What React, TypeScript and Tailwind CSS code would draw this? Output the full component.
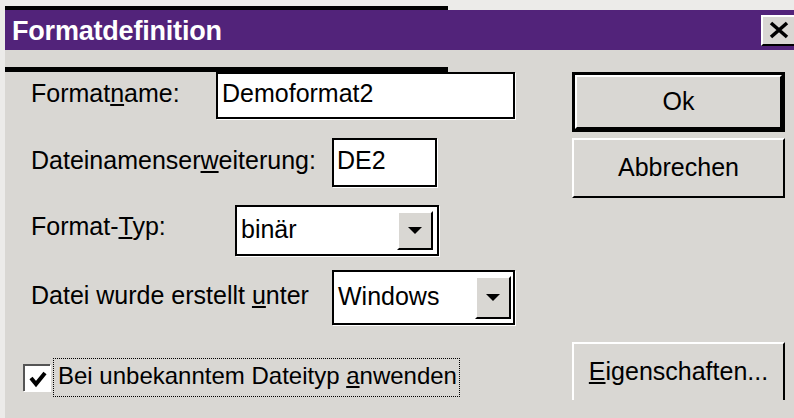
import React from 'react'

// Win9x-style bevels
const sunken = "border-2 border-black bg-white shadow-[1px_1px_0_#ffffff]"
const raised = "border-t-2 border-l-2 border-t-white border-l-white border-r-2 border-b-2 border-r-black border-b-black bg-[#d9d7d3]"

function DropButton() {
  return (
    <div className={`${raised} flex items-center justify-center w-[36px] h-full`}>
      <svg width="16" height="9" viewBox="0 0 16 9">
        <polygon points="1,1 15,1 8,8" fill="#000" />
      </svg>
    </div>
  )
}

function Button({ children, isDefault }: { children: React.ReactNode; isDefault?: boolean }) {
  if (isDefault) {
    return (
      <div className="w-[213px] h-[60px] border-[3px] border-black">
        <div className={`${raised} h-full flex items-center justify-center pb-[2px]`}>{children}</div>
      </div>
    )
  }
  return (
    <div className={`${raised} w-[213px] h-[60px] flex items-center justify-center pb-[2px]`}>{children}</div>
  )
}

export default function App() {
  return (
    <div className="w-[794px] h-[418px] overflow-hidden bg-[#ecebe9] font-[family-name:'Liberation_Sans',Arial,sans-serif] text-black text-[25px] leading-none">
      <div className="h-[6px]" />
      <div className="ml-[5px] w-[443px] h-[4px] bg-black" />

      {/* title bar */}
      <div className="ml-[5px] h-[40px] bg-[#52237a] flex items-center justify-between overflow-hidden">
        <span className="pl-[7px] pt-[2px] text-white font-bold text-[27px] tracking-[-0.2px]">Formatdefinition</span>
        <div className={`${raised} w-[40px] h-[31px] -mr-[7px] flex items-center pl-[5px]`}>
          <svg width="22" height="18" viewBox="0 0 22 18">
            <path d="M3 2 L19 16 M19 2 L3 16" stroke="#000" strokeWidth="3.6" />
          </svg>
        </div>
      </div>

      {/* dialog body */}
      <div className="ml-[5px] h-[368px] bg-[#d9d7d3] pt-[17px]">
        <div className="w-[443px] h-[5px] bg-black" />

        <div className="flex">
          <div className="w-[567px] pl-[21px]">
            <div className="flex items-center h-[47px]">
              <span className="w-[190px] pl-[5px] pb-[5px]">Format<u>n</u>ame:</span>
              <div className={`${sunken} w-[299px] h-full flex items-center pl-[4px] pb-[4px]`}>Demoformat2</div>
            </div>

            <div className="flex items-center h-[49px] mt-[19px]">
              <span className="w-[306px] pl-[5px] pb-[4px]">Dateinamenser<u>w</u>eiterung:</span>
              <div className={`${sunken} w-[105px] h-full flex items-center pl-[3px] pb-[4px]`}>DE2</div>
            </div>

            <div className="flex items-center h-[51px] mt-[18px]">
              <span className="w-[209px] pl-[5px] pb-[8px]">Format-<u>T</u>yp:</span>
              <div className={`${sunken} w-[204px] h-full flex items-stretch`}>
                <span className="flex-1 flex items-center pl-[4px] pb-[2px]">binär</span>
                <div className="py-[4px] pr-[4px]"><DropButton /></div>
              </div>
            </div>

            <div className="flex items-center h-[55px] mt-[14px]">
              <span className="w-[306px] pl-[5px] pb-[4px]">Datei wurde erstellt <u>u</u>nter</span>
              <div className={`${sunken} w-[183px] h-full flex items-stretch`}>
                <span className="flex-1 flex items-center pl-[4px] pb-[2px]">Windows</span>
                <div className="py-[4px] pr-[2px]"><DropButton /></div>
              </div>
            </div>

            <div className="flex items-center h-[39px] mt-[33px] -ml-[3px]">
              <div className="w-[27px] h-[27px] border-t-2 border-l-2 border-t-[#555] border-l-[#555] bg-white shadow-[1px_1px_0_#fff] flex items-center justify-center">
                <svg width="20" height="18" viewBox="0 0 20 18">
                  <path d="M3 8 L8 14 L17 3" stroke="#000" strokeWidth="4" fill="none" />
                </svg>
              </div>
              <div className="ml-[3px] h-full border border-dotted border-black flex items-center pl-[4px] pr-[2px] pb-[3px] text-[24px]">
                <span>Bei unbekanntem Dateityp <u>a</u>nwenden</span>
              </div>
            </div>
          </div>

          <div className="flex flex-col">
            <Button isDefault>Ok</Button>
            <div className="mt-[6px]"><Button>Abbrechen</Button></div>
            <div className="mt-[144px] h-[58px] overflow-hidden"><Button><span><u>E</u>igenschaften...</span></Button></div>
          </div>
        </div>
      </div>
    </div>
  )
}
